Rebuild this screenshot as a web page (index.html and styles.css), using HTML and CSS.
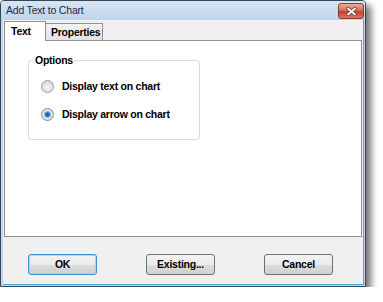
FILE: index.html
```html
<!DOCTYPE html>
<html lang="en">
	<head>
		<meta http-equiv="Content-Type" content="text/html;charset=utf-8" />
		<title>Add Text to Chart</title>
		<link rel="stylesheet" href="styles.css">
	</head>
	<body>
		<div id="dialog" class="window">
			<div class="titlebar">
				<span class="caption">Add Text to Chart</span>
				<span class="close">
					<svg width="11" height="9" viewBox="0 0 11 9">
						<path d="M2 1.5 L9 7.5 M9 1.5 L2 7.5" stroke="#6a3a33" stroke-width="3.4" stroke-linecap="round"/>
						<path d="M2 1.5 L9 7.5 M9 1.5 L2 7.5" stroke="#ffffff" stroke-width="1.8" stroke-linecap="round"/>
					</svg>
				</span>
			</div>
			<div class="client">
				<div class="tabs">
					<div class="tab selected">Text</div>
					<div class="tab">Properties</div>
				</div>
				<div class="panel">
					<fieldset class="group">
						<legend>Options</legend>
						<div class="option">
							<span class="radio"></span>
							<span class="label">Display text on chart</span>
						</div>
						<div class="option">
							<span class="radio checked"></span>
							<span class="label">Display arrow on chart</span>
						</div>
					</fieldset>
				</div>
				<div class="buttons">
					<div class="button default">OK</div>
					<div class="button">Existing...</div>
					<div class="button">Cancel</div>
				</div>
			</div>
		</div>
	</body>
</html>
```

FILE: styles.css
```css
html, body {
	margin: 0;
	padding: 0;
	background-color: #fff;
}

.window {
	box-sizing: border-box;
	width: 366px;
	height: 287px;
	border: 1px solid #33475b;
	border-radius: 4px 4px 0 0;
	background-color: #c3d6eb;
	box-shadow: 5px 5px 7px rgba(0,0,0,0.55);
	display: flex;
	flex-direction: column;
	font-family: "Liberation Sans", Arial, sans-serif;
	color: #000;
}

.titlebar {
	height: 19px;
	display: flex;
	align-items: flex-start;
	justify-content: space-between;
	padding: 2px 1px 0 5px;
	box-sizing: border-box;
	background-image: linear-gradient(#d7e5f4, #c0d4ea);
	border-radius: 3px 3px 0 0;
}
.titlebar .caption {
	font-size: 10.5px;
	letter-spacing: -0.2px;
	line-height: 15px;
	color: #1e2a36;
}
.titlebar .close {
	box-sizing: border-box;
	width: 26px;
	height: 16px;
	border: 1px solid #8a3b31;
	border-radius: 3px;
	background-image: linear-gradient(#e9a999 0%, #d6735f 45%, #c0402f 55%, #d7775e 100%);
	display: flex;
	align-items: center;
	justify-content: center;
}

.client {
	flex: 1;
	margin: 0 1px 1px 2px;
	background-color: #f0f0f0;
	border-right: 1px solid #4aa6dc;
	border-bottom: 1px solid #4aa6dc;
	display: flex;
	flex-direction: column;
}

.tabs {
	height: 20px;
	display: flex;
	align-items: flex-end;
	padding-left: 1px;
}
.tab {
	box-sizing: border-box;
	height: 17px;
	width: 57px;
	padding: 3px 0 0 5px;
	border: 1px solid #8e9196;
	border-left: none;
	border-bottom: none;
	background-image: linear-gradient(#f3f3f3, #e2e2e2);
	font-size: 10.5px;
	letter-spacing: -0.25px;
	font-weight: bold;
	line-height: 11px;
}
.tab.selected {
	height: 20px;
	width: 42px;
	padding: 4px 0 0 6px;
	border-left: 1px solid #8e9196;
	background-image: none;
	background-color: #fff;
	margin-bottom: -1px;
	position: relative;
	z-index: 1;
}

.panel {
	height: 197px;
	box-sizing: border-box;
	margin: 0 0 0 1px;
	width: 358px;
	border: 1px solid #8e9196;
	background-color: #fff;
	padding: 14px 0 0 23px;
}

.group {
	box-sizing: border-box;
	width: 172px;
	height: 85px;
	margin: 0;
	padding: 0 0 0 12px;
	border: 1px solid #d5dce3;
	border-radius: 3px;
}
.group legend {
	padding: 0 1px;
	margin-left: -7px;
	font-size: 10.5px;
	letter-spacing: -0.25px;
	font-weight: bold;
	line-height: 10px;
}

.option {
	height: 14px;
	display: flex;
	align-items: center;
	margin-top: 14px;
}
.option .label {
	margin-left: 8px;
	font-size: 10.5px;
	letter-spacing: -0.25px;
	font-weight: bold;
	line-height: 14px;
}

.radio {
	box-sizing: border-box;
	width: 13px;
	height: 13px;
	border: 1px solid #9a9c9e;
	border-radius: 50%;
	background-image: radial-gradient(circle at 50% 60%, #f6f6f6 0%, #e4e4e4 45%, #cfd0d1 100%);
}
.radio.checked {
	border-color: #7d8fa3;
	background-image: radial-gradient(circle at 50% 50%, #0e4f84 0%, #2f7ab7 25%, #7fb5df 38%, #e2e9ef 52%, #c9d0d6 100%);
}

.buttons {
	display: flex;
	gap: 49px;
	padding: 17px 0 0 25px;
}
.button {
	box-sizing: border-box;
	width: 69px;
	height: 21px;
	border: 1px solid #707070;
	border-radius: 3px;
	background-image: linear-gradient(#f3f3f3 0%, #ebebeb 50%, #dddddd 50%, #d0d0d0 100%);
	text-align: center;
	font-size: 10.5px;
	letter-spacing: -0.25px;
	font-weight: bold;
	line-height: 19px;
}
.button.default {
	border-color: #3b93cf;
	box-shadow: inset 0 0 0 1px #9fd9f6;
}
```
